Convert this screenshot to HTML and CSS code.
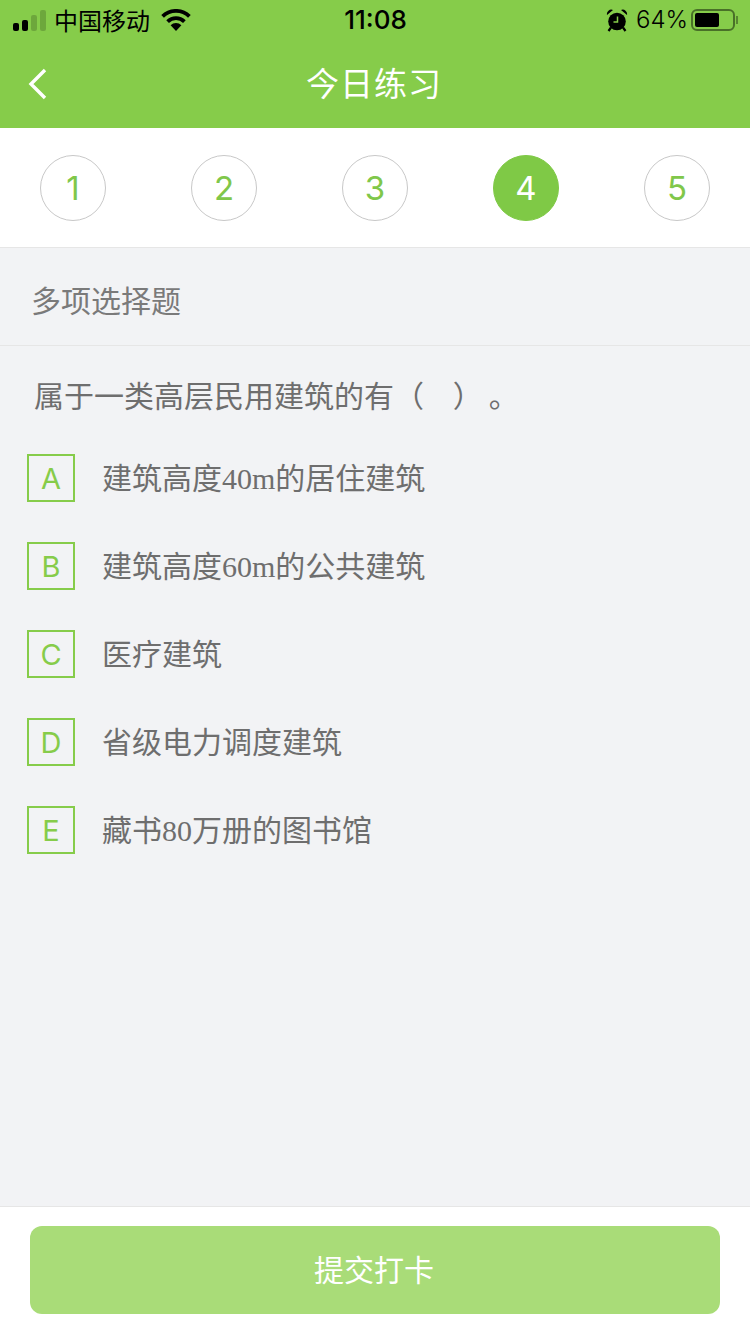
FILE: index.html
```html
<!DOCTYPE html>
<html lang="zh-CN">
<head>
  <meta charset="UTF-8">
  <meta name="viewport" content="width=device-width, initial-scale=1.0">
  <title>今日练习</title>
  <link rel="stylesheet" href="styles.css">
</head>
<body>
  <div class="page">
    <div class="top">
      <div class="status-bar">
        <div class="status-left">
          <div class="signal">
            <span class="bar bar-1"></span>
            <span class="bar bar-2"></span>
            <span class="bar bar-3 off"></span>
            <span class="bar bar-4 off"></span>
          </div>
          <span class="carrier">中国移动</span>
          <svg class="wifi" width="30" height="22" viewBox="0 0 30 22">
            <path d="M15 22 L9.6 16.2 A7.6 7.6 0 0 1 20.4 16.2 Z" fill="#000"/>
            <path d="M6.6 12.6 A12 12 0 0 1 23.4 12.6" fill="none" stroke="#000" stroke-width="3.8"/>
            <path d="M1.6 7.4 A19 19 0 0 1 28.4 7.4" fill="none" stroke="#000" stroke-width="3.8"/>
          </svg>
        </div>
        <div class="status-time">11:08</div>
        <div class="status-right">
          <svg class="alarm" width="22" height="23" viewBox="0 0 22 23">
            <circle cx="11" cy="12.5" r="8.8" fill="#000"/>
            <path d="M1 6 A4.4 4.4 0 0 1 7 1 Z M21 6 A4.4 4.4 0 0 0 15 1 Z" fill="#000"/>
            <path d="M5 18.5 L2.5 22 M17 18.5 L19.5 22" stroke="#000" stroke-width="2.2"/>
            <path d="M11.5 7.5 V13 H7.5" fill="none" stroke="#86cc4a" stroke-width="1.5"/>
          </svg>
          <span class="percent">64%</span>
          <div class="battery">
            <div class="battery-body"><div class="battery-level"></div></div>
            <div class="battery-cap"></div>
          </div>
        </div>
      </div>
      <div class="nav-bar">
        <svg class="back" width="20" height="32" viewBox="0 0 20 32">
          <path d="M17 2 L3 16 L17 30" fill="none" stroke="#fff" stroke-width="3.4"/>
        </svg>
        <h1 class="nav-title">今日练习</h1>
      </div>
    </div>

    <div class="steps">
      <div class="step">1</div>
      <div class="step">2</div>
      <div class="step">3</div>
      <div class="step active">4</div>
      <div class="step">5</div>
    </div>

    <div class="type-row">多项选择题</div>

    <div class="question">
      <p class="question-text">属于一类高层民用建筑的有（&nbsp;&nbsp;&nbsp;&nbsp;&hairsp;）&thinsp;。</p>
      <div class="option">
        <span class="option-key">A</span>
        <span class="option-text">建筑高度40m的居住建筑</span>
      </div>
      <div class="option">
        <span class="option-key">B</span>
        <span class="option-text">建筑高度60m的公共建筑</span>
      </div>
      <div class="option">
        <span class="option-key">C</span>
        <span class="option-text">医疗建筑</span>
      </div>
      <div class="option">
        <span class="option-key">D</span>
        <span class="option-text">省级电力调度建筑</span>
      </div>
      <div class="option">
        <span class="option-key">E</span>
        <span class="option-text">藏书80万册的图书馆</span>
      </div>
    </div>

    <div class="footer">
      <button class="submit">提交打卡</button>
    </div>
  </div>
</body>
</html>
```

FILE: styles.css
```css
* {
  box-sizing: border-box;
}
html, body {
  margin: 0;
  padding: 0;
}
body {
  background-color: #f2f3f5;
  font-family: "Noto Sans CJK SC", "Noto Sans", sans-serif;
  color: #666;
}
.page {
  width: 750px;
  height: 1334px;
  display: flex;
  flex-direction: column;
  overflow: hidden;
}

/* Barra verde do topo */
.top {
  height: 128px;
  background-color: #86cc4a;
}
.status-bar {
  height: 40px;
  display: flex;
  align-items: center;
  color: #000;
}
.status-left, .status-right {
  flex: 1;
  display: flex;
  align-items: center;
}
.status-left {
  padding-left: 13px;
}
.status-right {
  justify-content: flex-end;
  padding-right: 12px;
}
.signal {
  display: flex;
  align-items: flex-end;
  gap: 3px;
  height: 21px;
}
.bar {
  width: 6px;
  background-color: #000;
  border-radius: 2px;
}
.bar.off {
  background-color: rgba(0, 0, 0, 0.18);
}
.bar-1 { height: 8px; }
.bar-2 { height: 11px; }
.bar-3 { height: 16px; }
.bar-4 { height: 21px; }
.carrier {
  font-size: 24px;
  line-height: 40px;
  margin-left: 8px;
}
.wifi {
  margin-left: 11px;
}
.status-time {
  font-family: "Inter", sans-serif;
  font-size: 26px;
  font-weight: 500;
  line-height: 40px;
}
.alarm {
  margin-right: 8px;
}
.percent {
  font-family: "Inter", sans-serif;
  font-size: 24px;
  font-weight: 300;
  line-height: 40px;
  margin-right: 3px;
}
.battery {
  display: flex;
  align-items: center;
}
.battery-body {
  width: 44px;
  height: 22px;
  border: 2px solid rgba(0, 0, 0, 0.45);
  border-radius: 6px;
  padding: 2px;
}
.battery-level {
  width: 24px;
  height: 14px;
  background-color: #000;
  border-radius: 2px;
}
.battery-cap {
  width: 2px;
  height: 8px;
  margin-left: 1px;
  background-color: rgba(0, 0, 0, 0.35);
}
.nav-bar {
  height: 88px;
  position: relative;
  display: flex;
  align-items: center;
  justify-content: center;
}
.back {
  position: absolute;
  left: 28px;
  top: 28px;
}
.nav-title {
  margin: 0;
  padding: 0 2px 4px 0;
  font-size: 33px;
  font-weight: 400;
  color: #fff;
  letter-spacing: 1px;
}

/* Numeros das questoes */
.steps {
  height: 120px;
  padding: 0 40px;
  display: flex;
  align-items: center;
  justify-content: space-between;
  background-color: #fff;
  border-bottom: 1px solid #e6e6e6;
}
.step {
  width: 66px;
  height: 66px;
  border: 1px solid #c8c8c8;
  border-radius: 50%;
  display: flex;
  align-items: center;
  justify-content: center;
  font-family: "Inter", sans-serif;
  font-size: 33px;
  font-weight: 400;
  color: #80c74a;
}
.step.active {
  background-color: #7fc946;
  border-color: #7fc946;
  color: #fff;
}

.type-row {
  height: 98px;
  padding: 4px 0 0 31px;
  display: flex;
  align-items: center;
  font-size: 30px;
  color: #7a7a7a;
  border-bottom: 1px solid #e6e6e6;
}

/* Pergunta e alternativas */
.question {
  flex: 1;
}
.question-text {
  margin: 26px 0 38px;
  padding-left: 34px;
  font-size: 30px;
  line-height: 44px;
  color: #6e6e6e;
}
.option {
  display: flex;
  align-items: center;
  height: 48px;
  margin: 0 0 40px 27px;
}
.option-key {
  width: 48px;
  height: 48px;
  border: 2px solid #86cc4a;
  display: flex;
  align-items: center;
  justify-content: center;
  font-family: "Inter", sans-serif;
  font-size: 29px;
  font-weight: 400;
  color: #86cc4a;
}
.option-text {
  margin-left: 27px;
  padding-bottom: 4px;
  font-family: "Liberation Serif", "Noto Sans CJK SC", serif;
  font-size: 30px;
  color: #6e6e6e;
}

.footer {
  height: 128px;
  padding: 19px 30px 20px;
  background-color: #fff;
  border-top: 1px solid #e6e6e6;
}
.submit {
  display: block;
  width: 100%;
  height: 88px;
  padding: 0 2px 4px 0;
  border: none;
  border-radius: 12px;
  background-color: #a9dc78;
  color: #fff;
  font-family: "Noto Sans CJK SC", sans-serif;
  font-size: 30px;
}
```
